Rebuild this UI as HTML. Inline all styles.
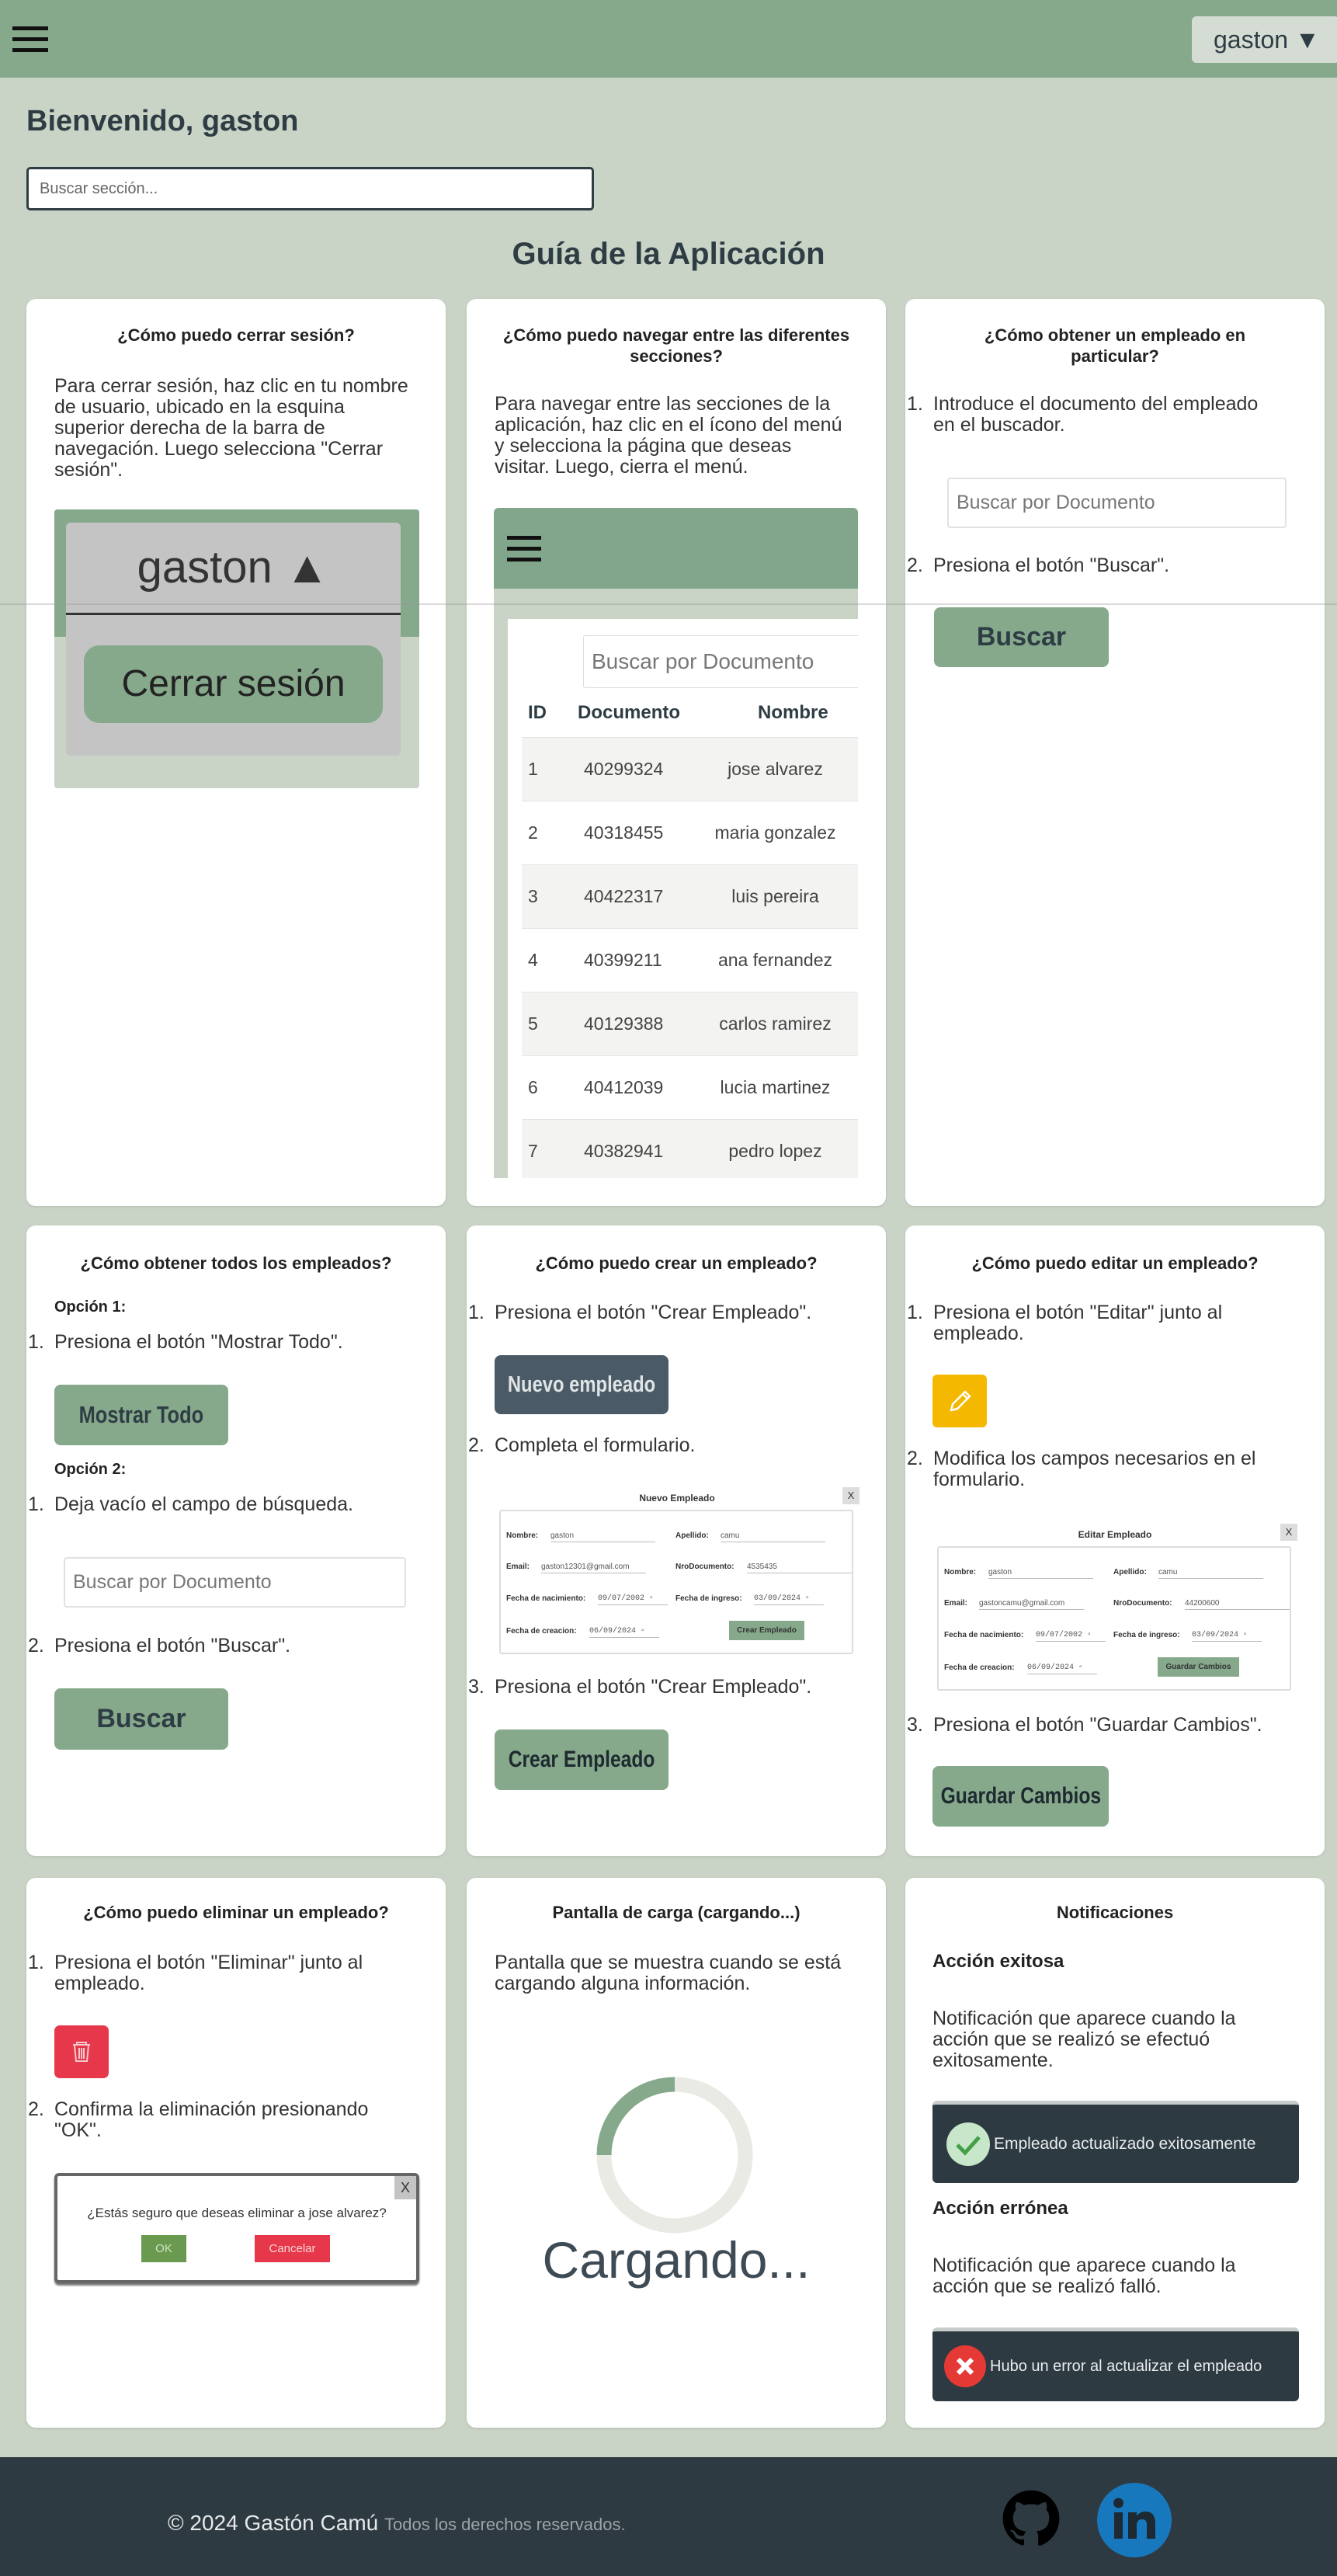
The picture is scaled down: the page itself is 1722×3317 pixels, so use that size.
<!DOCTYPE html>
<html><head><meta charset="utf-8">
<style>
*{box-sizing:border-box;margin:0;padding:0}
body{width:1722px;height:3317px;background:#c9d3c6;font-family:"Liberation Sans",Arial,sans-serif;color:#333;position:relative;overflow:hidden}
.a{position:absolute}
.card{position:absolute;background:#fff;border-radius:12px;width:540px;box-shadow:0 1px 3px rgba(0,0,0,.1)}
.t{position:absolute;font-weight:bold;font-size:22px;text-align:center;line-height:27px;color:#222}
.p{position:absolute;font-size:25px;line-height:27px;color:#333;white-space:nowrap}
.li{position:absolute;font-size:25px;line-height:27px;color:#333;white-space:nowrap}
.li b{position:absolute;left:-34px;font-weight:normal}
.btn{position:absolute;border-radius:8px;background:#86a98c;color:#2e3d44;font-weight:bold;display:flex;align-items:center;justify-content:center;white-space:nowrap}
.btn span{display:inline-block;transform:scaleX(.82)}
.inp{position:absolute;border:2px solid #e2e2e2;border-radius:4px;background:#fff;color:#777;font-size:25px;display:flex;align-items:center;padding-left:10px}
.frm{position:absolute;width:470px;height:222px;font-size:10px;color:#333}
.frm .bx{position:absolute;left:6px;top:36px;width:456px;height:186px;border:2px solid #ddd;border-radius:3px}
.frm .lb{position:absolute;font-weight:bold;font-size:10px}
.frm .v{position:absolute;font-size:10px;color:#555;border-bottom:1px solid #bbb;padding-bottom:2px}
.frm .d{font-family:"Liberation Mono",monospace}
.toast{position:absolute;background:#2e3a42;border-radius:6px;border-top:5px solid #c8cdca;color:#e8ecee;font-size:21px;display:flex;align-items:center;white-space:nowrap}
</style></head><body>

<div class="a" style="left:0;top:0;width:1722px;height:100px;background:#86a98c"></div>
<div class="a" style="left:16px;top:34px;width:46px;height:5px;background:#111"></div>
<div class="a" style="left:16px;top:48px;width:46px;height:5px;background:#111"></div>
<div class="a" style="left:16px;top:62px;width:46px;height:5px;background:#111"></div>
<div class="a" style="left:1535px;top:21px;width:190px;height:60px;background:#d5dcd3;border-radius:6px;font-size:32px;color:#2e3d44;line-height:60px;padding-left:28px">gaston ▼</div>

<div class="a" style="left:34px;top:135px;font-size:38px;font-weight:bold;color:#2e3d44">Bienvenido, gaston</div>
<div class="a" style="left:34px;top:215px;width:731px;height:56px;border:3px solid #2e3d44;border-radius:5px;background:#fff;font-size:20px;color:#666;line-height:50px;padding-left:14px">Buscar sección...</div>
<div class="a" style="left:0;top:305px;width:1722px;text-align:center;font-size:40px;font-weight:bold;color:#2e3d44">Guía de la Aplicación</div>

<div class="card" style="left:34px;top:385px;height:1168px"></div>
<div class="card" style="left:601px;top:385px;height:1168px"></div>
<div class="card" style="left:1166px;top:385px;height:1168px"></div>

<div class="t" style="left:34px;top:418px;width:540px">¿Cómo puedo cerrar sesión?</div>
<div class="p" style="left:70px;top:484px">Para cerrar sesión, haz clic en tu nombre<br>de usuario, ubicado en la esquina<br>superior derecha de la barra de<br>navegación. Luego selecciona "Cerrar<br>sesión".</div>
<div class="a" style="left:70px;top:656px;width:470px;height:359px;background:#c9d3c6;border-radius:4px;overflow:hidden">
 <div class="a" style="left:0;top:0;width:470px;height:164px;background:#86a98c"></div>
</div>
<div class="a" style="left:85px;top:673px;width:431px;height:300px;background:#c4c4c4;border-radius:6px"></div>
<div class="a" style="left:85px;top:697px;width:431px;text-align:center;font-size:58px;color:#333">gaston ▲</div>
<div class="a" style="left:85px;top:789px;width:431px;height:3px;background:#333"></div>
<div class="a" style="left:108px;top:831px;width:385px;height:100px;background:#86a98c;border-radius:20px;font-size:48px;color:#222;text-align:center;line-height:100px">Cerrar sesión</div>

<div class="t" style="left:631px;top:418px;width:480px">¿Cómo puedo navegar entre las diferentes secciones?</div>
<div class="p" style="left:637px;top:507px">Para navegar entre las secciones de la<br>aplicación, haz clic en el ícono del menú<br>y selecciona la página que deseas<br>visitar. Luego, cierra el menú.</div>
<div class="a" style="left:636px;top:654px;width:469px;height:863px;background:#c9d3c6;border-radius:6px 6px 0 0;overflow:hidden">
 <div class="a" style="left:0;top:0;width:469px;height:104px;background:#82a68b"></div>
 <div class="a" style="left:17px;top:36px;width:44px;height:5px;background:#111"></div>
 <div class="a" style="left:17px;top:50px;width:44px;height:5px;background:#111"></div>
 <div class="a" style="left:17px;top:64px;width:44px;height:5px;background:#111"></div>
 <div class="a" style="left:18px;top:143px;width:451px;height:720px;background:#fff"></div>
 <div class="a" style="left:115px;top:164px;width:360px;height:68px;border:1px solid #ddd;border-radius:3px;font-size:28px;color:#777;line-height:66px;padding-left:10px">Buscar por Documento</div>
 <div class="a" style="left:44px;top:250px;font-size:24px;font-weight:bold;color:#2e3d44">ID</div>
 <div class="a" style="left:108px;top:250px;font-size:24px;font-weight:bold;color:#2e3d44">Documento</div>
 <div class="a" style="left:340px;top:250px;font-size:24px;font-weight:bold;color:#2e3d44">Nombre</div>
 <div class="a" style="left:36px;top:295px;width:433px;font-size:23px;color:#444">
  <div style="height:82px;background:#f3f4f2;border-top:1px solid #e4e4e4;display:flex;align-items:center"><span style="width:80px;padding-left:8px">1</span><span style="width:140px">40299324</span><span style="width:213px;text-align:center">jose alvarez</span></div>
  <div style="height:82px;border-top:1px solid #e4e4e4;display:flex;align-items:center"><span style="width:80px;padding-left:8px">2</span><span style="width:140px">40318455</span><span style="width:213px;text-align:center">maria gonzalez</span></div>
  <div style="height:82px;background:#f3f4f2;border-top:1px solid #e4e4e4;display:flex;align-items:center"><span style="width:80px;padding-left:8px">3</span><span style="width:140px">40422317</span><span style="width:213px;text-align:center">luis pereira</span></div>
  <div style="height:82px;border-top:1px solid #e4e4e4;display:flex;align-items:center"><span style="width:80px;padding-left:8px">4</span><span style="width:140px">40399211</span><span style="width:213px;text-align:center">ana fernandez</span></div>
  <div style="height:82px;background:#f3f4f2;border-top:1px solid #e4e4e4;display:flex;align-items:center"><span style="width:80px;padding-left:8px">5</span><span style="width:140px">40129388</span><span style="width:213px;text-align:center">carlos ramirez</span></div>
  <div style="height:82px;border-top:1px solid #e4e4e4;display:flex;align-items:center"><span style="width:80px;padding-left:8px">6</span><span style="width:140px">40412039</span><span style="width:213px;text-align:center">lucia martinez</span></div>
  <div style="height:82px;background:#f3f4f2;border-top:1px solid #e4e4e4;display:flex;align-items:center"><span style="width:80px;padding-left:8px">7</span><span style="width:140px">40382941</span><span style="width:213px;text-align:center">pedro lopez</span></div>
 </div>
</div>

<div class="t" style="left:1236px;top:418px;width:400px">¿Cómo obtener un empleado en particular?</div>
<div class="li" style="left:1202px;top:507px"><b>1.</b>Introduce el documento del empleado<br>en el buscador.</div>
<div class="inp" style="left:1220px;top:615px;width:437px;height:65px">Buscar por Documento</div>
<div class="li" style="left:1202px;top:715px"><b>2.</b>Presiona el botón "Buscar".</div>
<div class="btn" style="left:1203px;top:782px;width:225px;height:77px;font-size:34px">Buscar</div>

<div class="a" style="left:0;top:777px;width:1722px;height:2px;background:rgba(150,150,150,.35)"></div>

<div class="card" style="left:34px;top:1578px;height:812px"></div>
<div class="card" style="left:601px;top:1578px;height:812px"></div>
<div class="card" style="left:1166px;top:1578px;height:812px"></div>

<div class="t" style="left:34px;top:1613px;width:540px">¿Cómo obtener todos los empleados?</div>
<div class="a" style="left:70px;top:1672px;font-size:20px;font-weight:bold;color:#222">Opción 1:</div>
<div class="li" style="left:70px;top:1715px"><b>1.</b>Presiona el botón "Mostrar Todo".</div>
<div class="btn" style="left:70px;top:1783px;width:224px;height:78px;font-size:31px"><span>Mostrar Todo</span></div>
<div class="a" style="left:70px;top:1881px;font-size:20px;font-weight:bold;color:#222">Opción 2:</div>
<div class="li" style="left:70px;top:1924px"><b>1.</b>Deja vacío el campo de búsqueda.</div>
<div class="inp" style="left:82px;top:2005px;width:441px;height:65px">Buscar por Documento</div>
<div class="li" style="left:70px;top:2106px"><b>2.</b>Presiona el botón "Buscar".</div>
<div class="btn" style="left:70px;top:2174px;width:224px;height:79px;font-size:34px">Buscar</div>

<div class="t" style="left:601px;top:1613px;width:540px">¿Cómo puedo crear un empleado?</div>
<div class="li" style="left:637px;top:1677px"><b>1.</b>Presiona el botón "Crear Empleado".</div>
<div class="btn" style="left:637px;top:1745px;width:224px;height:76px;font-size:29px;background:#4a5a66;color:#dfe4e6"><span>Nuevo empleado</span></div>
<div class="li" style="left:637px;top:1848px"><b>2.</b>Completa el formulario.</div>
<div class="frm" style="left:637px;top:1908px">
 <div class="a" style="left:0;top:14px;width:470px;text-align:center;font-weight:bold;font-size:12px">Nuevo Empleado</div>
 <div class="a" style="left:448px;top:7px;width:22px;height:22px;background:#ddd;text-align:center;line-height:22px;font-size:13px">X</div>
 <div class="bx"></div>
 <div class="lb" style="left:15px;top:64px">Nombre:</div><div class="v" style="left:72px;top:64px;width:135px">gaston</div>
 <div class="lb" style="left:233px;top:64px">Apellido:</div><div class="v" style="left:291px;top:64px;width:135px">camu</div>
 <div class="lb" style="left:15px;top:104px">Email:</div><div class="v" style="left:60px;top:104px;width:135px">gaston12301@gmail.com</div>
 <div class="lb" style="left:233px;top:104px">NroDocumento:</div><div class="v" style="left:325px;top:104px;width:135px">4535435</div>
 <div class="lb" style="left:15px;top:145px">Fecha de nacimiento:</div><div class="v d" style="left:133px;top:145px;width:90px">09/07/2002 ▫</div>
 <div class="lb" style="left:233px;top:145px">Fecha de ingreso:</div><div class="v d" style="left:334px;top:145px;width:90px">03/09/2024 ▫</div>
 <div class="lb" style="left:15px;top:187px">Fecha de creacion:</div><div class="v d" style="left:122px;top:187px;width:90px">06/09/2024 ▫</div>
 <div class="a" style="left:302px;top:179px;width:97px;height:25px;background:#86a98c;font-weight:bold;font-size:10px;text-align:center;line-height:25px">Crear Empleado</div>
</div>
<div class="li" style="left:637px;top:2159px"><b>3.</b>Presiona el botón "Crear Empleado".</div>
<div class="btn" style="left:637px;top:2227px;width:224px;height:78px;font-size:30px;color:#1e2a30"><span>Crear Empleado</span></div>

<div class="t" style="left:1166px;top:1613px;width:540px">¿Cómo puedo editar un empleado?</div>
<div class="li" style="left:1202px;top:1677px"><b>1.</b>Presiona el botón "Editar" junto al<br>empleado.</div>
<div class="a" style="left:1201px;top:1770px;width:70px;height:68px;background:#f5b800;border-radius:6px">
 <svg width="70" height="68" viewBox="0 0 70 68"><path d="M24 46 L26 38 L42 22 L48 28 L32 44 Z M39 25 L45 31" stroke="#fff" stroke-width="2.5" fill="none" stroke-linejoin="round"/></svg>
</div>
<div class="li" style="left:1202px;top:1865px"><b>2.</b>Modifica los campos necesarios en el<br>formulario.</div>
<div class="frm" style="left:1201px;top:1955px">
 <div class="a" style="left:0;top:14px;width:470px;text-align:center;font-weight:bold;font-size:12px">Editar Empleado</div>
 <div class="a" style="left:448px;top:7px;width:22px;height:22px;background:#ddd;text-align:center;line-height:22px;font-size:13px">X</div>
 <div class="bx"></div>
 <div class="lb" style="left:15px;top:64px">Nombre:</div><div class="v" style="left:72px;top:64px;width:135px">gaston</div>
 <div class="lb" style="left:233px;top:64px">Apellido:</div><div class="v" style="left:291px;top:64px;width:135px">camu</div>
 <div class="lb" style="left:15px;top:104px">Email:</div><div class="v" style="left:60px;top:104px;width:135px">gastoncamu@gmail.com</div>
 <div class="lb" style="left:233px;top:104px">NroDocumento:</div><div class="v" style="left:325px;top:104px;width:135px">44200600</div>
 <div class="lb" style="left:15px;top:145px">Fecha de nacimiento:</div><div class="v d" style="left:133px;top:145px;width:90px">09/07/2002 ▫</div>
 <div class="lb" style="left:233px;top:145px">Fecha de ingreso:</div><div class="v d" style="left:334px;top:145px;width:90px">03/09/2024 ▫</div>
 <div class="lb" style="left:15px;top:187px">Fecha de creacion:</div><div class="v d" style="left:122px;top:187px;width:90px">06/09/2024 ▫</div>
 <div class="a" style="left:290px;top:179px;width:105px;height:25px;background:#86a98c;font-weight:bold;font-size:10px;text-align:center;line-height:25px">Guardar Cambios</div>
</div>
<div class="li" style="left:1202px;top:2208px"><b>3.</b>Presiona el botón "Guardar Cambios".</div>
<div class="btn" style="left:1201px;top:2274px;width:227px;height:78px;font-size:30px;color:#1e2a30"><span>Guardar Cambios</span></div>

<div class="card" style="left:34px;top:2418px;height:708px"></div>
<div class="card" style="left:601px;top:2418px;height:708px"></div>
<div class="card" style="left:1166px;top:2418px;height:708px"></div>

<div class="t" style="left:34px;top:2449px;width:540px">¿Cómo puedo eliminar un empleado?</div>
<div class="li" style="left:70px;top:2514px"><b>1.</b>Presiona el botón "Eliminar" junto al<br>empleado.</div>
<div class="a" style="left:70px;top:2608px;width:70px;height:68px;background:#e6384a;border-radius:7px">
 <svg width="70" height="68" viewBox="0 0 70 68"><path d="M24 25 H46 M29 25 V22 H41 V25 M26 26 L28 46 H42 L44 26 M32 29 V43 M35 29 V43 M38 29 V43" stroke="#f6c9cd" stroke-width="2" fill="none"/></svg>
</div>
<div class="li" style="left:70px;top:2703px"><b>2.</b>Confirma la eliminación presionando<br>"OK".</div>
<div class="a" style="left:70px;top:2798px;width:470px;height:142px;background:#fff;border:4px solid #666;border-radius:6px;box-shadow:0 3px 2px #777">
 <div class="a" style="right:0;top:0;width:28px;height:30px;background:#c4c4c4;text-align:center;line-height:30px;font-size:18px">X</div>
 <div class="a" style="left:0;top:38px;width:462px;text-align:center;font-size:17px;color:#333">¿Estás seguro que deseas eliminar a jose alvarez?</div>
 <div class="a" style="left:108px;top:76px;width:58px;height:35px;background:#6a9a50;color:#cfe3c3;font-size:15px;text-align:center;line-height:35px">OK</div>
 <div class="a" style="left:254px;top:76px;width:97px;height:35px;background:#e6384a;color:#f6d6d8;font-size:15px;text-align:center;line-height:35px">Cancelar</div>
</div>

<div class="t" style="left:601px;top:2449px;width:540px">Pantalla de carga (cargando...)</div>
<div class="p" style="left:637px;top:2514px">Pantalla que se muestra cuando se está<br>cargando alguna información.</div>
<svg class="a" style="left:759px;top:2665px" width="220" height="220" viewBox="0 0 220 220">
 <circle cx="110" cy="110" r="91" stroke="#e9eae4" stroke-width="19" fill="none"/>
 <path d="M19 110 A91 91 0 0 1 110 19" stroke="#86a98c" stroke-width="19" fill="none"/>
</svg>
<div class="a" style="left:601px;top:2872px;width:540px;text-align:center;font-size:66px;color:#3e4b55">Cargando...</div>

<div class="t" style="left:1166px;top:2449px;width:540px">Notificaciones</div>
<div class="a" style="left:1201px;top:2512px;font-size:24px;font-weight:bold;color:#222">Acción exitosa</div>
<div class="p" style="left:1201px;top:2586px">Notificación que aparece cuando la<br>acción que se realizó se efectuó<br>exitosamente.</div>
<div class="toast" style="left:1201px;top:2705px;width:472px;height:106px">
 <svg style="margin-left:17px;margin-right:4px" width="58" height="58" viewBox="0 0 58 58"><circle cx="29" cy="29" r="28" fill="#c8e6c9"/><path d="M15 30 L25 40 L43 20" stroke="#43a047" stroke-width="5" fill="none"/></svg>
 <span>Empleado actualizado exitosamente</span>
</div>
<div class="a" style="left:1201px;top:2830px;font-size:24px;font-weight:bold;color:#222">Acción errónea</div>
<div class="p" style="left:1201px;top:2904px">Notificación que aparece cuando la<br>acción que se realizó falló.</div>
<div class="toast" style="left:1201px;top:2997px;width:472px;height:95px;font-size:20px">
 <svg style="margin-left:14px;margin-right:4px" width="56" height="56" viewBox="0 0 56 56"><circle cx="28" cy="28" r="27" fill="#e53935"/><path d="M19 19 L37 37 M37 19 L19 37" stroke="#fff" stroke-width="6"/></svg>
 <span>Hubo un error al actualizar el empleado</span>
</div>

<div class="a" style="left:0;top:3164px;width:1722px;height:153px;background:#2e3a42"></div>
<div class="a" style="left:216px;top:3233px;font-size:28px;color:#e6e9ea">© 2024 Gastón Camú <span style="font-size:22px;color:#9aa4a8">Todos los derechos reservados.</span></div>
<svg class="a" style="left:1290px;top:3205px" width="76" height="76" viewBox="0 0 24 24"><path fill="#000" d="M12 .5C5.65.5.5 5.65.5 12c0 5.08 3.29 9.39 7.86 10.91.58.1.79-.25.79-.56v-2c-3.2.7-3.87-1.37-3.87-1.37-.52-1.33-1.28-1.68-1.28-1.68-1.04-.71.08-.7.08-.7 1.15.08 1.76 1.18 1.76 1.18 1.03 1.76 2.69 1.25 3.35.96.1-.74.4-1.25.73-1.54-2.55-.29-5.24-1.28-5.24-5.68 0-1.26.45-2.28 1.18-3.09-.12-.29-.51-1.46.11-3.05 0 0 .97-.31 3.17 1.18a11 11 0 0 1 5.77 0c2.2-1.49 3.17-1.18 3.17-1.18.63 1.59.23 2.76.11 3.05.74.81 1.18 1.83 1.18 3.09 0 4.41-2.69 5.38-5.25 5.67.41.36.78 1.06.78 2.14v3.17c0 .31.21.67.8.56C20.21 21.38 23.5 17.08 23.5 12 23.5 5.65 18.35.5 12 .5z"/></svg>
<svg class="a" style="left:1413px;top:3197px" width="96" height="96" viewBox="0 0 96 96"><circle cx="48" cy="48" r="48" fill="#1878be"/><rect x="22" y="38" width="11" height="34" fill="#1d2a33"/><circle cx="27.5" cy="26" r="6.5" fill="#1d2a33"/><path d="M40 38 H51 V43 C54 38 59 37 63 37 C71 37 75 43 75 52 V72 H64 V54 C64 49 62 47 58 47 C54 47 51 49 51 55 V72 H40 Z" fill="#1d2a33"/></svg>
</body></html>
